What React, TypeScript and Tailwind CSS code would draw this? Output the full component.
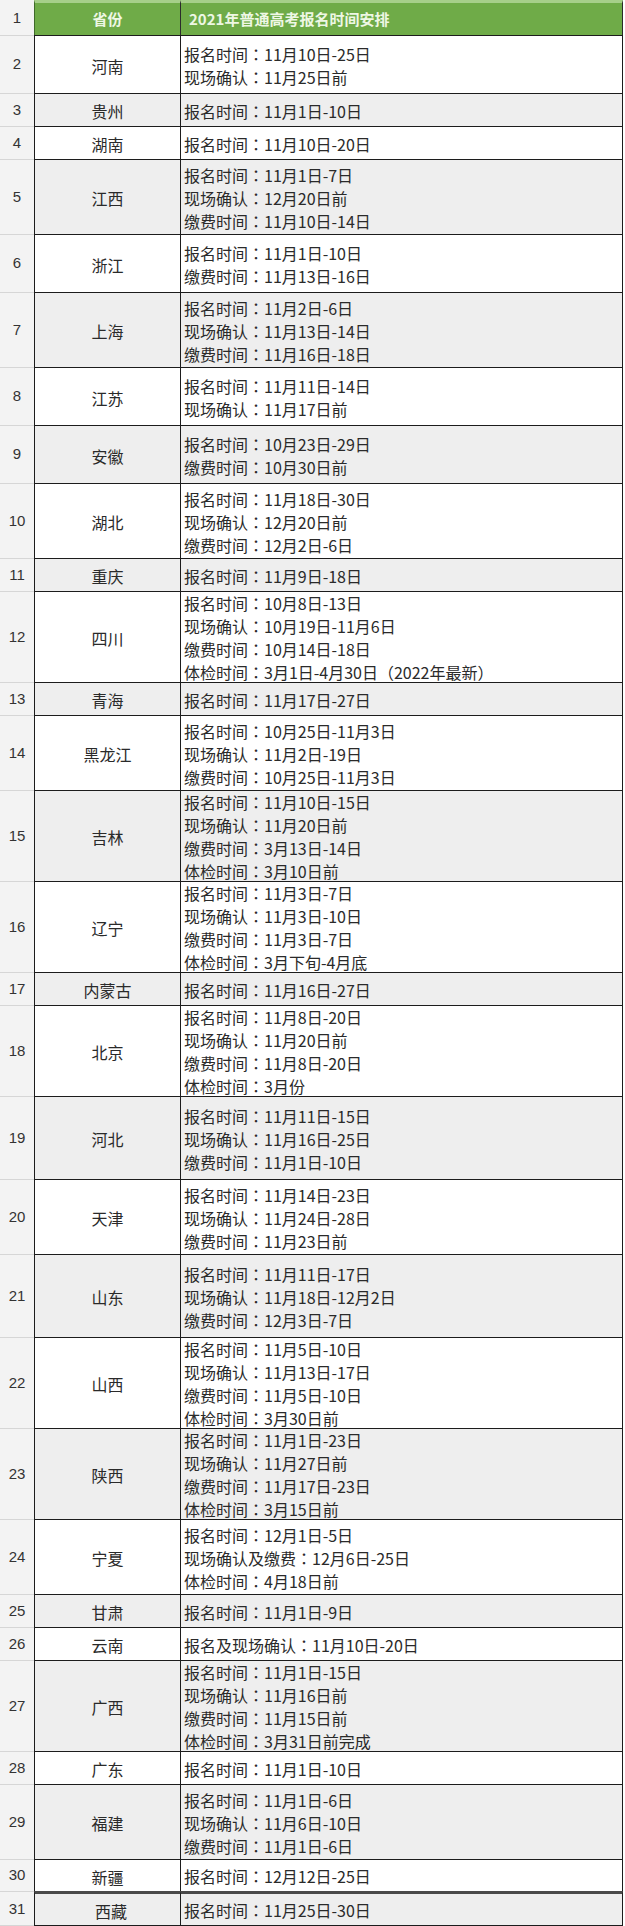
import React from "react";

type Row = { n: number; p: string; lines: string[]; h: number };

const rows: Row[] = [
  { n: 2, p: "河南", h: 58, lines: ["报名时间：11月10日-25日", "现场确认：11月25日前"] },
  { n: 3, p: "贵州", h: 33, lines: ["报名时间：11月1日-10日"] },
  { n: 4, p: "湖南", h: 33, lines: ["报名时间：11月10日-20日"] },
  { n: 5, p: "江西", h: 75, lines: ["报名时间：11月1日-7日", "现场确认：12月20日前", "缴费时间：11月10日-14日"] },
  { n: 6, p: "浙江", h: 58, lines: ["报名时间：11月1日-10日", "缴费时间：11月13日-16日"] },
  { n: 7, p: "上海", h: 75, lines: ["报名时间：11月2日-6日", "现场确认：11月13日-14日", "缴费时间：11月16日-18日"] },
  { n: 8, p: "江苏", h: 58, lines: ["报名时间：11月11日-14日", "现场确认：11月17日前"] },
  { n: 9, p: "安徽", h: 58, lines: ["报名时间：10月23日-29日", "缴费时间：10月30日前"] },
  { n: 10, p: "湖北", h: 75, lines: ["报名时间：11月18日-30日", "现场确认：12月20日前", "缴费时间：12月2日-6日"] },
  { n: 11, p: "重庆", h: 33, lines: ["报名时间：11月9日-18日"] },
  { n: 12, p: "四川", h: 91, lines: ["报名时间：10月8日-13日", "现场确认：10月19日-11月6日", "缴费时间：10月14日-18日", "体检时间：3月1日-4月30日（2022年最新）"] },
  { n: 13, p: "青海", h: 33, lines: ["报名时间：11月17日-27日"] },
  { n: 14, p: "黑龙江", h: 75, lines: ["报名时间：10月25日-11月3日", "现场确认：11月2日-19日", "缴费时间：10月25日-11月3日"] },
  { n: 15, p: "吉林", h: 91, lines: ["报名时间：11月10日-15日", "现场确认：11月20日前", "缴费时间：3月13日-14日", "体检时间：3月10日前"] },
  { n: 16, p: "辽宁", h: 91, lines: ["报名时间：11月3日-7日", "现场确认：11月3日-10日", "缴费时间：11月3日-7日", "体检时间：3月下旬-4月底"] },
  { n: 17, p: "内蒙古", h: 33, lines: ["报名时间：11月16日-27日"] },
  { n: 18, p: "北京", h: 91, lines: ["报名时间：11月8日-20日", "现场确认：11月20日前", "缴费时间：11月8日-20日", "体检时间：3月份"] },
  { n: 19, p: "河北", h: 83, lines: ["报名时间：11月11日-15日", "现场确认：11月16日-25日", "缴费时间：11月1日-10日"] },
  { n: 20, p: "天津", h: 75, lines: ["报名时间：11月14日-23日", "现场确认：11月24日-28日", "缴费时间：11月23日前"] },
  { n: 21, p: "山东", h: 83, lines: ["报名时间：11月11日-17日", "现场确认：11月18日-12月2日", "缴费时间：12月3日-7日"] },
  { n: 22, p: "山西", h: 91, lines: ["报名时间：11月5日-10日", "现场确认：11月13日-17日", "缴费时间：11月5日-10日", "体检时间：3月30日前"] },
  { n: 23, p: "陕西", h: 91, lines: ["报名时间：11月1日-23日", "现场确认：11月27日前", "缴费时间：11月17日-23日", "体检时间：3月15日前"] },
  { n: 24, p: "宁夏", h: 75, lines: ["报名时间：12月1日-5日", "现场确认及缴费：12月6日-25日", "体检时间：4月18日前"] },
  { n: 25, p: "甘肃", h: 33, lines: ["报名时间：11月1日-9日"] },
  { n: 26, p: "云南", h: 33, lines: ["报名及现场确认：11月10日-20日"] },
  { n: 27, p: "广西", h: 91, lines: ["报名时间：11月1日-15日", "现场确认：11月16日前", "缴费时间：11月15日前", "体检时间：3月31日前完成"] },
  { n: 28, p: "广东", h: 33, lines: ["报名时间：11月1日-10日"] },
  { n: 29, p: "福建", h: 75, lines: ["报名时间：11月1日-6日", "现场确认：11月6日-10日", "缴费时间：11月1日-6日"] },
  { n: 30, p: "新疆", h: 32, lines: ["报名时间：12月12日-25日"] },
];

const hClass: Record<number, string> = {
  32: "h-[32px]",
  33: "h-[33px]",
  35: "h-[35px]",
  58: "h-[58px]",
  75: "h-[75px]",
  83: "h-[83px]",
  91: "h-[91px]",
};

const cjk = { fontFamily: '"Noto Sans CJK SC", "Noto Sans CJK JP", sans-serif' };
const colonFont = { fontFamily: '"Noto Sans CJK TC", "Noto Sans CJK SC", sans-serif' };

function Line({ text }: { text: string }) {
  const i = text.indexOf("：");
  const label = text.slice(0, i);
  const rest = text.slice(i + 1);
  return (
    <div className="whitespace-nowrap">
      {label}
      <span style={colonFont}>：</span>
      {rest}
    </div>
  );
}

function DataRow({ r, last }: { r: Row; last?: boolean }) {
  const gray = r.n % 2 === 1;
  const bg = gray ? "bg-[#eeeeee]" : "bg-white";
  const topDark = last ? "border-t-[3px] border-t-[#4a4a4a]" : "border-t border-t-[#1c1c1c]";
  const bottom = last ? "border-b border-b-[#1c1c1c]" : "";
  return (
    <div className={`flex ${hClass[r.h]}`}>
      <div
        className={`w-[34px] shrink-0 flex items-center justify-center bg-[#f3f3f3] text-[15px] text-[#333333] border-t border-t-[#d6d6d6] ${last ? "border-b border-b-[#d6d6d6] pt-[2px]" : ""}`}
        style={{ fontFamily: '"Liberation Sans", Arial, sans-serif' }}
      >
        {r.n}
      </div>
      <div
        className={`w-[146px] shrink-0 flex items-center justify-center border-l border-l-[#1c1c1c] ${bg} ${topDark} ${bottom} text-[16px] text-[#2a2a2a] pt-[2px] ${last ? "pl-[7px]" : ""}`}
      >
        {r.p}
      </div>
      <div
        className={`w-[443px] shrink-0 flex flex-col justify-center border-l border-l-[#1c1c1c] border-r border-r-[#1c1c1c] ${bg} ${topDark} ${bottom} pl-[3px] pt-[2px] text-[16px] leading-[23px] text-[#2a2a2a]`}
      >
        {r.lines.map((l, k) => (
          <Line key={k} text={l} />
        ))}
      </div>
    </div>
  );
}

export default function App() {
  const last: Row = { n: 31, p: "西藏", h: 35, lines: ["报名时间：11月25日-30日"] };
  return (
    <div className="w-[625px] h-[1926px] bg-white overflow-hidden" style={cjk}>
      <div className="flex h-[35px]">
        <div
          className="w-[34px] shrink-0 flex items-center justify-center bg-[#f3f3f3] text-[15px] text-[#333333] pt-[2px]"
          style={{ fontFamily: '"Liberation Sans", Arial, sans-serif' }}
        >
          1
        </div>
        <div className="w-[146px] shrink-0 flex items-center justify-center bg-[#6fab48] border-t-[3px] border-t-[#a6cf8a] border-l border-l-[#3f6a2a] text-[15px] font-bold text-[#eef7e4]">
          省份
        </div>
        <div className="w-[443px] shrink-0 flex items-center bg-[#6fab48] border-t-[3px] border-t-[#a6cf8a] border-l border-l-[#2b2b2b] border-r border-r-[#2b2b2b] pl-[8px] text-[15px] font-bold text-[#eef7e4]">
          2021年普通高考报名时间安排
        </div>
      </div>
      {rows.map((r) => (
        <DataRow key={r.n} r={r} />
      ))}
      <DataRow r={last} last />
    </div>
  );
}
